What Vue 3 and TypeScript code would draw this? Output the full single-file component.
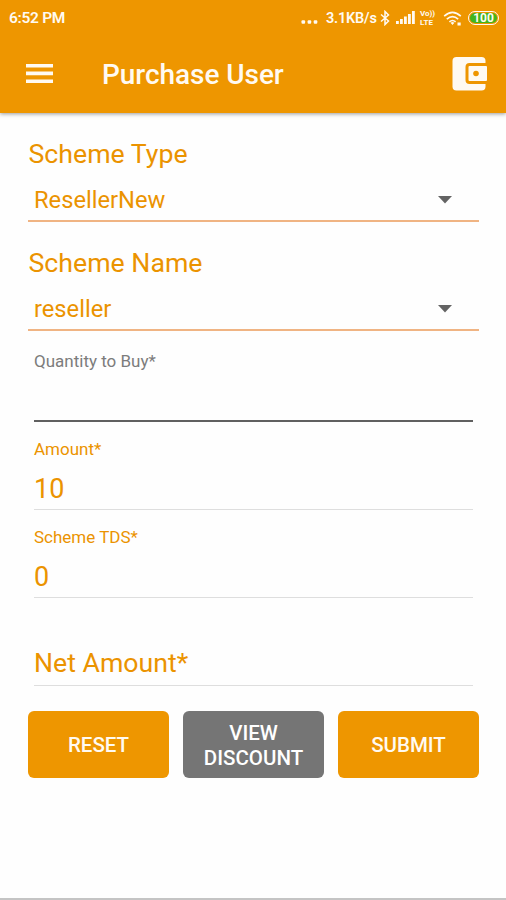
<script setup lang="ts">
import { ref } from 'vue'

interface Select {
  label: string
  value: string
}

interface Field {
  label: string
  value: string
  kind: 'focus' | 'filled' | 'empty'
}

const selects = ref<Select[]>([
  { label: 'Scheme Type', value: 'ResellerNew' },
  { label: 'Scheme Name', value: 'reseller' },
])

const fields = ref<Field[]>([
  { label: 'Quantity to Buy*', value: '', kind: 'focus' },
  { label: 'Amount*', value: '10', kind: 'filled' },
  { label: 'Scheme TDS*', value: '0', kind: 'filled' },
  { label: 'Net Amount*', value: '', kind: 'empty' },
])
</script>

<template>
  <div class="screen">
    <header class="header">
      <div class="status">
        <span class="time">6:52 PM</span>
        <svg class="dots" width="17" height="4" viewBox="0 0 17 4">
          <rect x="0.5" y="0.3" width="3.6" height="3.4" rx="1" />
          <rect x="6.6" y="0.3" width="3.6" height="3.4" rx="1" />
          <rect x="12.7" y="0.3" width="3.6" height="3.4" rx="1" />
        </svg>
        <span class="speed">3.1KB/s</span>
        <svg class="bluetooth" width="10" height="16" viewBox="0 0 10 16">
          <path d="M1 4.5 8.5 11 5 14.5V1.5L8.5 5 1 11.5" />
        </svg>
        <svg class="signal" width="19" height="13" viewBox="0 0 19 13">
          <path d="M0 10h2.8v3H0zM4 8h2.8v5H4zM8 5.5h2.8V13H8zM12 3h2.8v10H12zM16 0h2.8v13H16z" />
        </svg>
        <span class="volte"><span>Vo))</span><span>LTE</span></span>
        <svg class="wifi" width="20" height="15" viewBox="0 0 20 15">
          <path class="arc" d="M1.2 5.2Q9.5-2.4 17.8 5.2M3.8 8.1q5.7-5 11.4 0M6.4 10.8q3.1-2.6 6.2 0" />
          <path class="fill" d="M7.6 11.8q1.9-1.4 3.8 0L9.5 14zM14.5 11.5h3.2v3h-3.2z" />
        </svg>
        <span class="battery"><span class="charge">100</span></span>
      </div>
      <div class="bar">
        <svg class="menu" width="27" height="20" viewBox="0 0 27 20">
          <path d="M0 0h27v3.6H0zM0 7.6h27v3.6H0zM0 15.4h27v3.5H0z" />
        </svg>
        <h1 class="title">Purchase User</h1>
        <svg class="wallet" width="37" height="36" viewBox="0 0 37 36">
          <rect x="1.5" y="1" width="33" height="33.5" rx="4" />
          <rect class="cut" x="14.5" y="7" width="24" height="21" rx="4" />
          <rect x="17.5" y="10" width="18.5" height="15" rx="1" />
          <circle class="cut" cx="25" cy="17.5" r="2.8" />
        </svg>
      </div>
    </header>

    <main class="form">
      <section v-for="item in selects" :key="item.label" class="select-group">
        <div class="select-label">{{ item.label }}</div>
        <div class="select">
          <span>{{ item.value }}</span>
          <svg width="14" height="8" viewBox="0 0 14 8"><path d="M0 0h14L7 7.5z" /></svg>
        </div>
      </section>

      <div class="fields">
        <div v-for="field in fields" :key="field.label" class="field" :class="field.kind">
          <div class="field-label">{{ field.label }}</div>
          <div v-if="field.kind === 'filled'" class="field-value">{{ field.value }}</div>
        </div>
      </div>

      <div class="actions">
        <button class="button" type="button">RESET</button>
        <button class="button secondary" type="button">VIEW<br />DISCOUNT</button>
        <button class="button" type="button">SUBMIT</button>
      </div>
    </main>
  </div>
</template>

<style>
body {
  margin: 0;
  background: #fefefe;
}
</style>

<style scoped>
.screen {
  box-sizing: border-box;
  width: 506px;
  height: 900px;
  display: flex;
  flex-direction: column;
  overflow: hidden;
  background: #fefefe;
  border-bottom: 2px solid #c4c4c4;
  color: #eb9300;
  font-family: Roboto, sans-serif;
}
.header {
  height: 113px;
  flex: none;
  background: #ee9600;
  color: #fffaf2;
  box-shadow: 0 1px 4px rgba(0, 0, 0, 0.4);
}
.header svg {
  flex: none;
  fill: #fffaf2;
}
.status {
  box-sizing: border-box;
  height: 36px;
  display: flex;
  align-items: center;
  padding: 0 7px 0 9px;
  font-weight: 500;
}
.time {
  font-size: 15.5px;
  font-weight: 600;
  letter-spacing: -0.3px;
}
.dots {
  margin: 8px 8px 0 auto;
}
.speed {
  width: 51px;
  font-size: 14.5px;
  font-weight: 600;
  letter-spacing: -0.2px;
  white-space: nowrap;
}
.header .bluetooth {
  margin-left: 3px;
  fill: none;
  stroke: #fffaf2;
  stroke-width: 1.5;
}
.signal {
  margin: -1px 5px 0 6px;
}
.volte {
  width: 17px;
  display: flex;
  flex-direction: column;
  font-size: 8px;
  font-weight: 700;
  line-height: 8px;
  gap: 1px;
  white-space: nowrap;
}
.wifi {
  margin-left: 6px;
}
.header .wifi .arc {
  fill: none;
  stroke: #fffaf2;
  stroke-width: 1.6;
}
.battery {
  box-sizing: border-box;
  width: 31px;
  height: 14px;
  margin-left: 5px;
  padding: 1px;
  border: 1.5px solid #fffaf2;
  border-radius: 7px;
}
.charge {
  display: block;
  height: 10px;
  border-radius: 5px;
  background: #43b51c;
  font-size: 12px;
  font-weight: 700;
  line-height: 10.5px;
  text-align: center;
}
.bar {
  box-sizing: border-box;
  height: 77px;
  display: flex;
  align-items: center;
  padding: 0 18px 1px 26px;
}
.title {
  margin: 0 auto 0 49px;
  font-size: 28px;
  font-weight: 500;
  letter-spacing: -0.05px;
}
.header .wallet .cut {
  fill: #ee9600;
}
.form {
  padding: 26px 27px 0 28px;
}
.select-group {
  margin-bottom: 26px;
}
.select-label {
  margin: 0 0 11px 0.5px;
  font-size: 26.7px;
  line-height: 30px;
}
.select {
  height: 40px;
  display: flex;
  align-items: center;
  justify-content: space-between;
  padding: 0 27px 0 6px;
  border-bottom: 2px solid #f0b483;
  font-size: 23.7px;
}
.select svg {
  margin-top: -1px;
  fill: #636363;
}
.fields {
  margin: -23px 6px 0;
}
.field {
  box-sizing: border-box;
  height: 88px;
  display: flex;
  flex-direction: column;
  padding-top: 17px;
  border-bottom: 1px solid #dedede;
}
.field-label {
  font-size: 17px;
  line-height: 20px;
}
.field-value {
  margin-top: 11px;
  font-size: 27px;
  line-height: 39px;
}
.focus {
  border-bottom: 2px solid #606060;
  color: #7c7c7c;
}
.empty .field-label {
  margin-top: 29px;
  font-size: 26.7px;
  line-height: 39px;
}
.actions {
  display: grid;
  grid-template-columns: repeat(3, 141px);
  gap: 14px;
  margin-top: 25px;
}
.button {
  height: 67px;
  padding: 2px 0 0;
  border: 0;
  border-radius: 6px;
  background: #ee9600;
  color: #fffaf2;
  font: 500 20.5px/25px Roboto, sans-serif;
}
.secondary {
  background: #757575;
  color: #fff;
}
</style>
